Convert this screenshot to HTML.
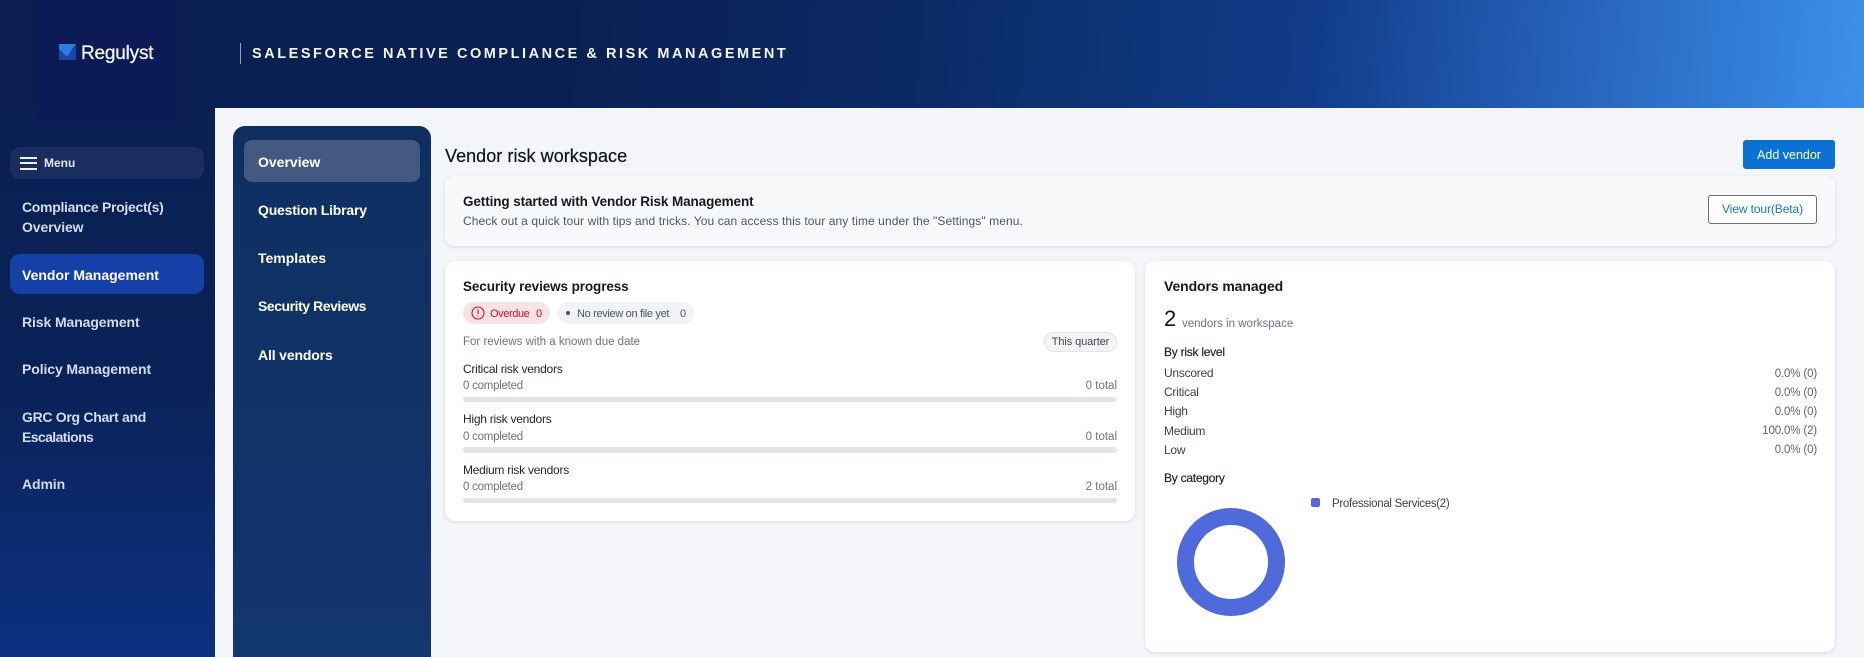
<!DOCTYPE html>
<html lang="en"><head><meta charset="utf-8"><title>Regulyst</title>
<style>
html,body{margin:0;padding:0;width:1864px;height:657px;overflow:hidden;background:#f3f5f9;font-family:"Liberation Sans",sans-serif}
.a{position:absolute}
.t{position:absolute;white-space:nowrap;line-height:20px;height:20px}
.nav{color:#d3dbea;font-size:14px;font-weight:700;left:22px;letter-spacing:-.1px}
.sub{color:#fff;font-size:14px;font-weight:700;left:258px}
.h{color:#16191f;font-size:14px;font-weight:700;letter-spacing:-.1px}
.lab{color:#1f2530;font-size:12px;letter-spacing:-.25px}
.g{color:#6b7382;font-size:11.5px}
.c{letter-spacing:-.25px}
.bar{position:absolute;left:463px;width:654px;height:5px;background:#e3e4e8;border-radius:3px}
.r{color:#3b4250;font-size:12px;left:1164px;letter-spacing:-.25px}
.v{color:#5c6472;font-size:11.5px;right:47px;letter-spacing:-.15px}
.card{position:absolute;background:#fff;border-radius:10px;box-shadow:0 1px 3px rgba(20,30,60,.13)}
</style></head><body>
<div class="a" style="left:0;top:0;width:1864px;height:108px;background:linear-gradient(96deg,#0a1f4f 0%,#0a2052 30%,#0b2a66 50%,#0c2f6e 54%,#113b88 70%,#1d52a6 78%,#2a68c0 86%,#337fd8 94%,#3d90ea 100%)"></div>
<div class="a" style="left:0;top:108px;width:215px;height:549px;background:linear-gradient(180deg,#0a2052 0%,#0a2258 50%,#0c3080 100%)"></div>
<div class="a" style="left:36px;top:0;width:143px;height:125px;background:#0c1a55"></div>

<svg class="a" style="left:59px;top:43px" width="18" height="18" viewBox="0 0 18 18"><path d="M0 1V6L8 14 17 1Z" fill="#2a7de1"/><path d="M0 6V17H17V2L8 14Z" fill="#1f44a8"/></svg>
<div class="t" style="left:81px;top:44px;color:#f2f5fa;font-size:19px;font-weight:400;-webkit-text-stroke:.3px #f2f5fa;letter-spacing:-.2px">Regulyst</div>
<div class="a" style="left:240px;top:43px;width:1px;height:21px;background:#8fa0be"></div>
<div class="t" style="left:252px;top:44px;color:#f2f5fa;font-size:14.5px;font-weight:700;letter-spacing:2.54px">SALESFORCE NATIVE COMPLIANCE &amp; RISK MANAGEMENT</div>

<div class="a" style="left:10px;top:147px;width:194px;height:32px;border-radius:10px;background:#1a2d5f"></div>
<div class="a" style="left:20px;top:157px;width:17px;height:2px;background:#f0f3fa;box-shadow:0 5px 0 #f0f3fa,0 11px 0 #f0f3fa"></div>
<div class="t" style="left:44px;top:153px;color:#e2e7f5;font-size:12px;font-weight:700">Menu</div>

<div class="t nav" style="top:197px;letter-spacing:-.3px">Compliance Project(s)</div>
<div class="t nav" style="top:217px">Overview</div>
<div class="a" style="left:10px;top:254px;width:194px;height:40px;border-radius:10px;background:#1440a8"></div>
<div class="t nav" style="top:265px;color:#fff;letter-spacing:0">Vendor Management</div>
<div class="t nav" style="top:312px">Risk Management</div>
<div class="t nav" style="top:359px">Policy Management</div>
<div class="t nav" style="top:407px;letter-spacing:-.3px">GRC Org Chart and</div>
<div class="t nav" style="top:427px;letter-spacing:-.6px">Escalations</div>
<div class="t nav" style="top:474px">Admin</div>

<div class="a" style="left:233px;top:126px;width:198px;height:531px;border-radius:12px 12px 0 0;background:linear-gradient(180deg,#0e2f60,#12366e)"></div>
<div class="a" style="left:244px;top:140px;width:176px;height:42px;border-radius:8px;background:#44597f"></div>
<div class="t sub" style="top:152px">Overview</div>
<div class="t sub" style="top:200px;letter-spacing:-.2px">Question Library</div>
<div class="t sub" style="top:248px">Templates</div>
<div class="t sub" style="top:296px;letter-spacing:-.45px">Security Reviews</div>
<div class="t sub" style="top:345px;letter-spacing:-.15px">All vendors</div>

<div class="t" style="left:445px;top:146px;color:#10141c;font-size:18px;letter-spacing:.05px;-webkit-text-stroke:.2px #10141c">Vendor risk workspace</div>
<div class="a" style="left:1743px;top:140px;width:92px;height:29px;border-radius:3px;background:#0b72d5;color:#fff;font-size:12.5px;line-height:31px;text-align:center">Add vendor</div>

<div class="card" style="left:445px;top:176px;width:1390px;height:70px;background:#f8f9fb"></div>
<div class="t h" style="left:463px;top:192px;font-size:13.5px">Getting started with Vendor Risk Management</div>
<div class="t" style="left:463px;top:211px;color:#4f5764;font-size:12px;letter-spacing:.08px">Check out a quick tour with tips and tricks. You can access this tour any time under the "Settings" menu.</div>
<div class="a" style="left:1708px;top:195px;width:107px;height:27px;background:#fff;border:1px solid #746e7c;border-radius:3px;color:#1a72d8;font-size:12px;letter-spacing:-.1px;line-height:27px;text-align:center">View tour(Beta)</div>

<div class="card" style="left:445px;top:261px;width:690px;height:260px"></div>
<div class="t h" style="left:463px;top:277px;font-size:13.5px">Security reviews progress</div>
<div class="a" style="left:463px;top:302px;width:87px;height:22px;border-radius:11px;background:#fbe3e3"></div>
<svg class="a" style="left:471px;top:306px" width="14" height="14" viewBox="0 0 14 14"><circle cx="7" cy="7" r="6" fill="none" stroke="#c8102e" stroke-width="1.1"/><path d="M7 3.5V8M7 9.6V10.6" stroke="#c8102e" stroke-width="1.1" fill="none"/></svg>
<div class="t" style="left:490px;top:304px;color:#c0142c;font-size:11px;letter-spacing:-.4px">Overdue</div>
<div class="t" style="left:536px;top:304px;color:#c0142c;font-size:11px">0</div>
<div class="a" style="left:557px;top:302px;width:137px;height:22px;border-radius:11px;background:#f1f3f7"></div>
<div class="a" style="left:566px;top:311px;width:4px;height:4px;border-radius:50%;background:#4b5563"></div>
<div class="t" style="left:577px;top:304px;color:#4b5563;font-size:11px;letter-spacing:-.33px">No review on file yet</div>
<div class="t" style="left:680px;top:304px;color:#4b5563;font-size:11px">0</div>
<div class="t g" style="left:463px;top:332px">For reviews with a known due date</div>
<div class="a" style="left:1044px;top:332px;width:71px;height:18px;border:1px solid #e2e3e6;border-radius:10px;background:#f5f5f6;color:#3f4652;font-size:11px;letter-spacing:-.1px;line-height:18px;text-align:center">This quarter</div>

<div class="t lab" style="left:463px;top:359px">Critical risk vendors</div>
<div class="t g c" style="left:463px;top:376px">0 completed</div>
<div class="t g" style="right:747px;top:376px">0 total</div>
<div class="bar" style="top:397px"></div>
<div class="t lab" style="left:463px;top:409px">High risk vendors</div>
<div class="t g c" style="left:463px;top:427px">0 completed</div>
<div class="t g" style="right:747px;top:427px">0 total</div>
<div class="bar" style="top:447px;height:6px"></div>
<div class="t lab" style="left:463px;top:460px">Medium risk vendors</div>
<div class="t g c" style="left:463px;top:477px">0 completed</div>
<div class="t g" style="right:747px;top:477px">2 total</div>
<div class="bar" style="top:498px"></div>

<div class="card" style="left:1145px;top:261px;width:690px;height:391px"></div>
<div class="t h" style="left:1164px;top:276px">Vendors managed</div>
<div class="t" style="left:1164px;top:309px;color:#10141c;font-size:22px">2</div>
<div class="t g" style="left:1182px;top:314px">vendors in workspace</div>
<div class="t" style="left:1164px;top:342px;color:#1f2530;font-size:12px;letter-spacing:-.25px;-webkit-text-stroke:.2px #1f2530">By risk level</div>
<div class="t r" style="top:363px">Unscored</div><div class="t v" style="top:364px">0.0% (0)</div>
<div class="t r" style="top:382px">Critical</div><div class="t v" style="top:383px">0.0% (0)</div>
<div class="t r" style="top:401px">High</div><div class="t v" style="top:402px">0.0% (0)</div>
<div class="t r" style="top:421px">Medium</div><div class="t v" style="top:421px">100.0% (2)</div>
<div class="t r" style="top:440px">Low</div><div class="t v" style="top:440px">0.0% (0)</div>
<div class="t" style="left:1164px;top:468px;color:#1f2530;font-size:12px;letter-spacing:-.25px;-webkit-text-stroke:.2px #1f2530">By category</div>
<svg class="a" style="left:1177px;top:508px" width="108" height="108" viewBox="0 0 108 108"><circle cx="54" cy="54" r="45.5" fill="none" stroke="#4f6bdb" stroke-width="17"/></svg>
<div class="a" style="left:1311px;top:498px;width:9px;height:9px;border-radius:2px;background:#5b63e0"></div>
<div class="t r" style="left:1332px;top:494px;font-size:11.5px;letter-spacing:-.3px">Professional Services(2)</div>
</body></html>
